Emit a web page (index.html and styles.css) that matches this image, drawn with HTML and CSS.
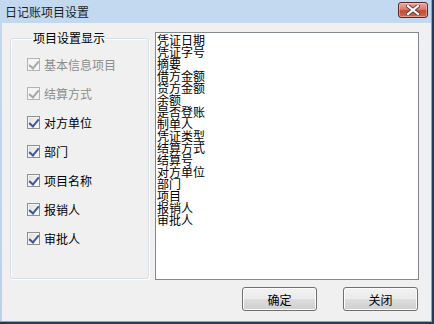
FILE: index.html
```html
<!DOCTYPE html>
<html lang="zh-CN">
<head>
    <meta charset="UTF-8">
    <title>日记账项目设置</title>
    <link rel="stylesheet" href="styles.css">
</head>
<body>
    <div class="window">
        <div class="frame">
            <div class="titlebar">
                <span class="title">日记账项目设置</span>
                <button class="close-btn" title="关闭">
                    <svg width="14" height="10" viewBox="0 0 14 10">
                        <path d="M2 1 L12 9 M12 1 L2 9" stroke="#5a3a3a" stroke-width="4" stroke-linecap="square"/>
                        <path d="M2 1 L12 9 M12 1 L2 9" stroke="#ffffff" stroke-width="2.2" stroke-linecap="square"/>
                    </svg>
                </button>
            </div>

            <div class="client">
                <div class="main-row">
                    <fieldset class="group">
                        <legend class="group-title">项目设置显示</legend>
                        <div class="check-list">
                            <label class="check disabled"><span class="box"></span>基本信息项目</label>
                            <label class="check disabled"><span class="box"></span>结算方式</label>
                            <label class="check"><span class="box"></span>对方单位</label>
                            <label class="check"><span class="box"></span>部门</label>
                            <label class="check"><span class="box"></span>项目名称</label>
                            <label class="check"><span class="box"></span>报销人</label>
                            <label class="check"><span class="box"></span>审批人</label>
                        </div>
                    </fieldset>

                    <ul class="listbox">
                        <li>凭证日期</li>
                        <li>凭证字号</li>
                        <li>摘要</li>
                        <li>借方金额</li>
                        <li>贷方金额</li>
                        <li>余额</li>
                        <li>是否登账</li>
                        <li>制单人</li>
                        <li>凭证类型</li>
                        <li>结算方式</li>
                        <li>结算号</li>
                        <li>对方单位</li>
                        <li>部门</li>
                        <li>项目</li>
                        <li>报销人</li>
                        <li>审批人</li>
                    </ul>
                </div>

                <div class="button-row">
                    <button class="btn">确定</button>
                    <button class="btn">关闭</button>
                </div>
            </div>
        </div>
    </div>
</body>
</html>
```

FILE: styles.css
```css
* {
    margin: 0;
    padding: 0;
    box-sizing: border-box;
    font-family: "Noto Sans CJK SC", "Noto Sans", sans-serif;
}

body {
    width: 434px;
    height: 324px;
    overflow: hidden;
}

.window {
    width: 434px;
    height: 324px;
    background: #1f3d5c;
    padding: 0 2px 2px 0;
}

.frame {
    width: 432px;
    height: 322px;
    background: linear-gradient(#c3d9f0, #b9d1ea);
    border-right: 1px solid #3ec2e6;
    border-bottom: 1px solid #3ec2e6;
    display: flex;
    flex-direction: column;
}

.titlebar {
    height: 23px;
    display: flex;
    align-items: center;
    justify-content: space-between;
    padding: 0 3px 0 5px;
}

.title {
    font-size: 12px;
    line-height: 14px;
    color: #1e1e1e;
    margin-top: 1px;
}

.close-btn {
    width: 30px;
    height: 16px;
    margin-top: -3px;
    border: 1px solid #5e2626;
    border-radius: 3px;
    background: linear-gradient(#e9a99b 0%, #d77d6c 45%, #c14a36 55%, #cf6a4f 100%);
    box-shadow: inset 0 0 0 1px rgba(255, 220, 210, 0.45);
    display: flex;
    align-items: center;
    justify-content: center;
}

.client {
    flex: 1;
    margin-left: 2px;
    background: #f0f0f0;
    padding: 8px 12px 0 8px;
    display: flex;
    flex-direction: column;
}

.main-row {
    display: flex;
    align-items: flex-start;
    gap: 6px;
}

.group {
    width: 139px;
    height: 248px;
    border: 1px solid #d5dfe5;
    border-radius: 3px;
    box-shadow: inset 1px 1px 0 #ffffff, 1px 1px 0 #ffffff;
    padding: 0 0 0 16px;
}

.group-title {
    font-size: 12px;
    line-height: 14px;
    margin-left: 5px;
    padding: 0 1px;
    color: #000000;
}

.check-list {
    display: flex;
    flex-direction: column;
    gap: 13px;
    padding-top: 11px;
}

.check {
    height: 16px;
    display: flex;
    align-items: center;
    gap: 4px;
    font-size: 12px;
    color: #000000;
}

.check.disabled {
    color: #8d8d8d;
}

.box {
    width: 13px;
    height: 13px;
    border: 1px solid #8e8f8f;
    background: linear-gradient(135deg, #dcdcdc, #ffffff);
    box-shadow: inset 0 0 0 1px #f4f4f4;
    position: relative;
}

.box::after {
    content: "";
    position: absolute;
    left: 3px;
    top: 0px;
    width: 4px;
    height: 8px;
    border-right: 2px solid #3f57a1;
    border-bottom: 2px solid #3f57a1;
    transform: rotate(40deg);
}

.check.disabled .box {
    border-color: #b4b4b4;
    background: #f4f4f4;
}

.check.disabled .box::after {
    border-color: #a8a8a8;
}

.listbox {
    list-style: none;
    width: 264px;
    height: 248px;
    margin-top: 1px;
    background: #ffffff;
    border: 1px solid #828790;
    padding: 1px 1px;
}

.listbox li {
    font-size: 12px;
    line-height: 12px;
    height: 12px;
    color: #000000;
}

.button-row {
    display: flex;
    justify-content: flex-end;
    gap: 26px;
    margin-top: 7px;
    margin-right: 1px;
}

.btn {
    width: 75px;
    height: 24px;
    border: 1px solid #707070;
    border-radius: 3px;
    background: linear-gradient(#f2f2f2 0%, #ebebeb 50%, #dddddd 51%, #cfcfcf 100%);
    box-shadow: inset 0 0 0 1px #fcfcfc;
    font-size: 12px;
    color: #000000;
}
```
